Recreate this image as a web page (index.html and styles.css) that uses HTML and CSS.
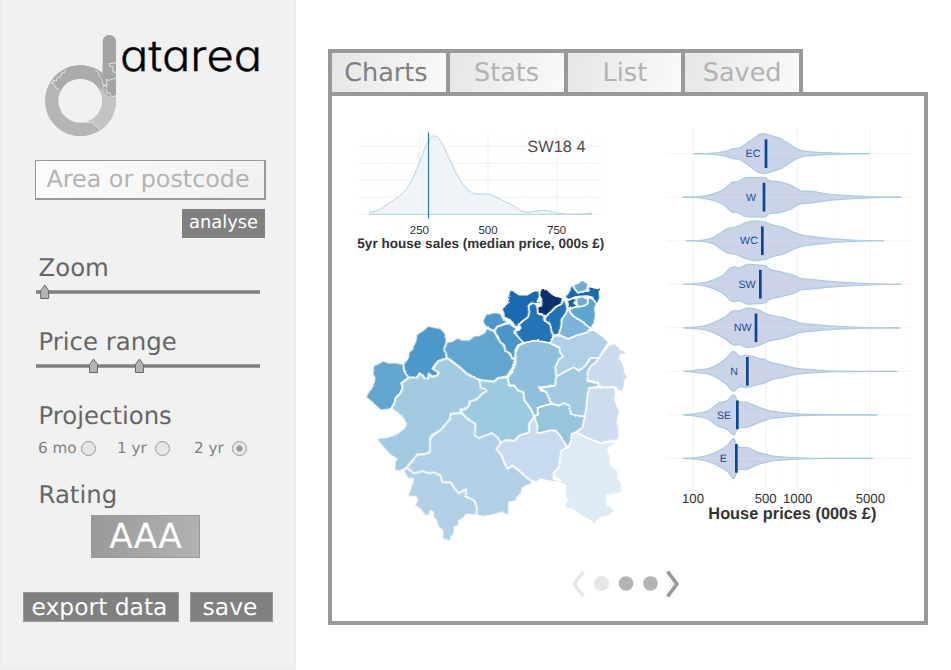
FILE: index.html
```html
<!DOCTYPE html>
<html lang="en">
<head>
<meta charset="utf-8">
<title>datarea</title>
<link rel="stylesheet" href="styles.css">
</head>
<body>
<aside class="sidebar">
  <header class="brand">
    <svg class="brand-mark" viewBox="0 0 255 330">
      <clipPath id="mark"><path clip-rule="evenodd" d="M188 35a20 20 0 0 1 40 0V212A106.500 106.500 0 1 1 188 129ZM121 146a66 66 0 1 0 .1 0Z"/></clipPath>
      <g clip-path="url(#mark)">
        <rect width="255" height="330" fill="#b5b5b5"/>
        <path fill="#ababab" d="M33 157 56 178 120 210 188 172 190 100 70 95Z"/>
        <path fill="#a4a4a4" d="M166 120 180 132 190 150 188 0H255V205H208L188 172Z"/>
        <path fill="#c3c3c3" d="M188 172 195 192 206 198 218 200 230 196V330H180L176 297 164 280 140 272Z"/>
        <g class="mark-lines">
          <path d="M77 119 73 129 66 128 61 140 51 144 49 153 40 151 39 160 33 158M35 158 45 166 49 177 57 178"/>
          <path d="M166 121 175 127 178 140 186 149 189 162 193 170M188 172 196 163 202 168 198 176 201 190 209 188 214 200 229 197"/>
          <path d="M228 98 207 101 210 110 219 109 219 126 228 127M228 144 206 151 199 148 201 163 194 169"/>
          <path d="M135 277 151 278 158 274 164 285 171 288 177 298"/>
        </g>
      </g>
    </svg>
    <svg class="brand-name" viewBox="0 0 150 50"><text x="0" y="41" textLength="142" lengthAdjust="spacingAndGlyphs">atarea</text></svg>
  </header>
  <div class="field">Area or postcode</div>
  <div class="button analyse">analyse</div>
  <section class="control zoom">
    <h2>Zoom</h2>
    <svg class="slider" viewBox="0 0 224 20"><path class="track" d="M0 10H224"/><path class="thumb" d="M4.700 16.500V8.500L8.700 3 12.700 8.500V16.500Z"/></svg>
  </section>
  <section class="control">
    <h2>Price range</h2>
    <svg class="slider" viewBox="0 0 224 20"><path class="track" d="M0 10H224"/><path class="thumb" d="M53.500 16.500V8.500L57.500 3 61.500 8.500V16.500ZM99.400 16.500V8.500L103.400 3 107.400 8.500V16.500Z"/></svg>
  </section>
  <section class="control projections">
    <h2>Projections</h2>
    <div class="radios">
      <span class="option">6 mo</span><i class="radio"></i>
      <span class="option year">1 yr</span><i class="radio"></i>
      <span class="option last">2 yr</span><i class="radio on"></i>
    </div>
  </section>
  <section class="rating">
    <h2>Rating</h2>
    <div class="grade">AAA</div>
  </section>
  <footer class="actions"><div class="button export">export data</div><div class="button save">save</div></footer>
</aside>
<main class="content">
  <nav class="tabs"><div class="tab active">Charts</div><div class="tab">Stats</div><div class="tab list">List</div><div class="tab">Saved</div></nav>
  <div class="panel">
    <div class="charts">
      <div class="column">
        <svg class="density" viewBox="90 255 780 390">
          <g class="minor"><path d="M195 277V535M401 277V535M607 277V535M813 277V535M118 292H848M118 344H848M118 395H848M118 447H848M118 498H848"/></g>
          <g class="major"><path d="M298 277V535M504 277V535M710 277V535M118 318H848M118 370H848M118 421H848M118 472H848M118 523H848"/></g>
          <path id="density-area" class="area"/>
          <path class="median-line" d="M325.500 277V536"/>
          <text class="place" x="622" y="337" textLength="175">SW18 4</text>
          <g class="ticks"><text x="298" y="582">250</text><text x="504" y="582">500</text><text x="710" y="582">750</text></g>
          <text class="axis-title" x="112" y="623" textLength="741" lengthAdjust="spacingAndGlyphs">5yr house sales (median price, 000s £)</text>
        </svg>
        <svg class="map" viewBox="0 0 870 840">
          <filter id="coast" x="0" y="0" width="1" height="1" color-interpolation-filters="sRGB"><feTurbulence type="fractalNoise" baseFrequency=".28" numOctaves="1" seed="4"/><feDisplacementMap in="SourceGraphic" scale="7" xChannelSelector="R" yChannelSelector="G"/></filter>
          <g transform="translate(2 2)"><g filter="url(#coast)">
          <path fill="#62a6d0" d="M44 378 66 346 72 322 66 310 68 285 84 278 96 270 114 276 134 275 158 280 160 300 175 321 152 338 157 350 148 370 136 380 130 400 122 415 90 419 60 392Z"/>
          <path fill="#4d98ca" d="M158 280 172 262 174 243 185 236 188 222 195 212 197 192 222 175 232 163 242 168 270 173 284 188 288 214 280 235 286 250 289 263 262 272 246 294 265 306 258 316 243 318 234 309 234 323 222 324 216 314 206 309 200 320 175 321 164 308 160 295Z"/>
          <path fill="#62a6d0" d="M289 213 305 211 320 201 333 207 356 207 368 195 385 194 402 185 408 172 430 181 440 200 450 215 460 225 465 240 478 248 484 262 492 265 486 290 475 308 465 318 443 322 430 333 400 330 384 327 350 311 325 288 300 268 289 263 286 250 280 235Z"/>
          <path fill="#4d98ca" d="M397 155 397 148 406 130 430 125 450 128 458 145 472 155 440 168 430 181 412 172 402 165Z"/>
          <g transform="translate(420 0)">
            <path fill="#4a96c9" d="M20 168 55 157 68 168 78 174 70 185 85 200 100 215 80 225 74 240 72 265 64 262 58 248 45 240 40 222 30 215 20 195 12 181Z"/>
            <path fill="#1b69b2" d="M33 115 52 95 53 75 58 55 75 65 85 72 110 72 130 60 145 60 147 78 140 92 150 90 150 98 135 100 120 98 114 105 116 125 112 140 98 150 85 160 78 172 68 160 58 148 40 140 38 125Z"/>
            <path fill="#2473b6" d="M135 100 140 110 142 128 160 135 160 148 178 160 182 180 188 195 178 218 150 212 130 210 100 217 88 205 75 190 75 180 85 178 90 172 85 162 98 150 112 140 116 125 114 105 125 98Z"/>
            <path fill="#2171b5" d="M165 138 182 122 195 108 212 100 218 85 224 92 230 115 225 130 212 148 212 165 205 190 188 195 182 180 178 160 163 150Z"/>
            <path fill="#08306b" d="M148 60 158 53 172 58 180 68 195 75 216 82 212 100 195 108 182 122 172 130 165 138 155 130 142 128 140 110 152 105 152 85 146 75Z"/>
            <path fill="#1b69b2" d="M222 80 232 68 240 48 248 42 250 52 262 66 285 62 295 60 290 48 300 48 318 53 330 52 326 65 328 80 320 102 310 95 305 80 290 76 262 78 250 80 235 88Z"/>
            <path fill="#6aaed6" d="M248 42 262 38 272 28 282 32 293 40 290 50 288 60 262 66 252 55Z"/>
            <path fill="#1460a8" d="M228 90 250 82 258 90 250 96 260 106 245 112 230 112 232 100Z"/>
            <path fill="#5fa5d0" d="M235 118 245 112 262 108 280 106 292 98 290 80 305 84 318 98 313 115 315 135 312 155 300 174 270 150 245 135Z"/>
            <path fill="#6aaed6" d="M256 82 275 78 290 84 292 98 278 106 262 108 258 96Z"/>
            <path fill="#7ab4d9" d="M232 115 245 135 270 150 300 174 285 187 260 194 232 205 210 195 205 190 212 165 212 148 225 130Z"/>
            <path fill="#b1d0e8" d="M190 195 210 195 232 205 260 194 285 187 303 175 320 185 340 200 355 215 345 228 335 245 325 262 300 262 290 275 285 285 265 300 248 290 220 305 195 318 193 290 205 265 217 258 208 245 206 230 178 218Z"/>
            <path fill="#cadbf0" d="M355 222 370 218 385 228 390 235 408 245 408 250 390 252 386 262 395 275 402 295 403 308 411 318 402 330 402 345 392 368 385 360 372 348 345 352 325 348 322 335 300 330 290 332 292 300 302 285 315 275 325 262 340 240Z"/>
            <path fill="#8ec0dd" d="M100 217 130 210 150 212 178 218 206 232 208 245 217 258 205 265 193 290 197 318 193 345 146 350 150 360 168 365 178 390 185 400 160 405 140 412 142 432 130 437 120 415 100 388 98 365 82 360 70 345 55 345 50 320 65 305 75 275 75 245 85 225Z"/>
            <path fill="#a3cae1" d="M197 318 220 305 248 290 265 300 285 285 300 262 325 262 315 275 302 285 292 300 290 332 322 338 322 348 295 352 290 380 288 405 282 438 262 435 240 432 236 405 220 398 205 405 185 400 178 390 168 365 148 352 193 345Z"/>
            <path fill="#cddcf0" d="M295 352 322 350 345 350 372 350 376 365 372 385 380 405 388 425 382 440 380 455 385 475 385 500 378 510 350 512 330 517 290 502 255 485 275 470 282 438 288 405 290 380Z"/>
            <path fill="#98c5de" d="M130 437 142 432 140 412 160 405 185 400 205 405 220 398 236 405 240 430 262 435 282 438 275 470 255 485 243 490 242 510 232 532 220 515 208 495 195 480 175 480 145 488 138 485 140 465Z"/>
            <path fill="#c7daef" d="M130 437 140 465 138 485 145 488 175 480 195 480 208 495 220 515 230 532 212 540 208 570 205 590 190 605 188 625 210 632 195 635 160 628 148 625 145 635 130 632 125 633 100 615 85 600 65 585 50 595 40 575 30 550 17 535 30 515 45 508 70 510 85 495 115 485 115 460 125 445Z"/>
            <path fill="#deebf4" d="M255 485 290 502 330 517 378 513 380 518 355 530 350 540 360 555 358 580 370 590 382 600 382 620 393 640 393 665 370 672 348 675 348 700 360 708 370 718 360 735 330 742 308 760 300 750 270 735 245 715 225 712 222 700 232 685 222 675 225 645 200 635 210 628 190 620 190 605 205 590 208 560 212 540 232 530 242 510 243 490Z"/>
          </g>
          <path fill="#a2cbe1" d="M122 415 130 400 136 380 148 370 157 350 152 338 175 321 200 320 206 309 216 314 222 324 234 323 234 309 243 318 258 316 265 306 246 294 262 272 289 263 325 288 350 311 384 327 390 340 390 352 405 355 408 363 395 368 385 380 370 390 357 392 355 405 345 415 330 415 328 427 300 430 298 445 270 478 245 492 238 502 238 545 225 550 200 552 175 580 165 593 145 602 132 600 132 572 138 565 118 553 80 510 82 502 115 498 140 488 160 472 166 460 155 440 140 427Z"/>
          <path fill="#9ccae1" d="M384 327 400 330 430 333 443 322 470 320 475 345 490 345 502 360 518 365 520 388 540 415 550 437 545 445 535 460 535 485 505 495 490 510 465 508 450 515 440 500 425 488 410 492 385 502 372 495 374 460 355 448 335 430 332 418 345 415 355 405 357 392 370 390 385 380 395 368 408 363 405 355 390 352 390 340Z"/>
          <path fill="#b1d0e6" d="M328 427 335 430 355 448 374 460 372 495 385 502 410 492 425 488 440 500 450 515 437 535 450 550 460 575 470 595 485 585 505 600 520 615 545 633 540 640 515 652 512 668 500 680 495 692 475 695 475 728 468 735 455 725 418 735 400 738 378 735 378 708 370 690 345 678 346 655 325 668 312 655 300 635 275 635 270 615 250 605 235 608 215 602 190 608 168 592 200 552 225 550 238 545 238 502 270 478 298 445 300 430Z"/>
          <path fill="#b1d0e6" d="M158 600 168 592 190 608 215 602 235 608 250 605 270 615 275 635 300 635 312 655 325 668 346 655 345 678 370 690 378 708 378 733 345 732 340 742 325 750 325 765 313 768 310 790 300 800 300 808 308 812 295 812 275 805 275 780 260 765 258 750 247 740 247 725 240 720 235 738 220 732 210 718 190 703 200 690 195 678 170 678 180 650 188 625 170 622Z"/>
          </g></g>
        </svg>
      </div>
      <svg class="violins" viewBox="0 0 816 1230">
        <path class="minor" d="M239 24V1090M394 24V1090M550 24V1090M770 24V1090"/>
        <path class="major" d="M129 24V1105M348 24V1105M442 24V1105M661 24V1105"/>
        <g id="violin-rows"></g>
        <g class="price-ticks"><text x="129" y="1149">100</text><text x="347" y="1149">500</text><text x="443" y="1149">1000</text><text x="661" y="1149">5000</text></g>
        <text class="price-title" x="175" y="1196" textLength="504" lengthAdjust="spacingAndGlyphs">House prices (000s £)</text>
      </svg>
    </div>
    <svg class="pager" viewBox="0 0 110 30">
      <path class="faint" d="M13.500 2.500 4 15 13.500 27.500"/>
      <circle cx="31.600" cy="14.500" r="7.500" fill="#e6e6e6"/><circle cx="56" cy="14.500" r="7.300" fill="#b3b3b3"/><circle cx="80.500" cy="14.500" r="7.300" fill="#b3b3b3"/>
      <path d="M97.500 2.500 107 15 97.500 27.500"/>
    </svg>
  </div>
</main>
<script src="charts.js"></script>
</body>
</html>
```
FILE: styles.css
```css
* { box-sizing: border-box; }
body { margin: 0; width: 951px; height: 670px; display: flex; background: #fff; font-family: "DejaVu Sans", sans-serif; overflow: hidden; text-rendering: geometricPrecision; }
svg { display: block; flex: none; }
h2 { margin: 0; font-size: 24.400px; font-weight: 400; line-height: 32px; height: 30px; color: #666; padding-left: .5px; }

.sidebar { width: 296px; height: 670px; flex: none; background: #f1f1f1; border: 1px solid #ececec; border-top-color: #eee; padding: 0 0 0 22px; margin-right: 32px; }
.brand { display: flex; height: 159px; padding: 29px 0 0 17px; }
.brand-mark { width: 85px; height: 110px; margin-right: -5px; }
.brand-name { width: 150px; height: 50px; overflow: visible; }
.brand-name text { font: 300 43px Inter, sans-serif; font-feature-settings: "cv11"; fill: #000; stroke: #000; stroke-width: .3; }
.mark-lines { fill: none; stroke: #eee; stroke-width: 2.5; stroke-linejoin: round; }
.field { width: 231px; height: 40px; margin-left: 12px; border: solid #999; border-width: 1.500px 2px 2px 1.500px; padding-left: 10.500px; background: linear-gradient(100deg, #fcfcfc, #f1f1f1); color: #b3b3b3; font-size: 23.800px; line-height: 37px; white-space: nowrap; }
.button { background: #808080; color: #fff; text-align: center; white-space: nowrap; }
.analyse { width: 83px; height: 29px; margin: 9px 0 14px 159px; font-size: 17.900px; line-height: 27px; }
.control { height: 74px; padding-left: 15px; }
.slider { width: 224px; height: 20px; margin-left: -2px; }
.track { stroke: #808080; stroke-width: 3.700; fill: none; }
.thumb { fill: #b3b3b3; stroke: #666; stroke-width: 1; }
.projections { height: 79px; }
.radios { display: flex; align-items: center; height: 18px; margin-top: 9px; font-size: 15.200px; color: #808080; }
.option { white-space: nowrap; width: 43px; margin: 0; }
.year { width: 38px; margin-left: 21px; }
.last { width: 38px; margin-left: 24px; }
.radio { width: 15px; height: 15px; border: 1.500px solid #999; border-radius: 50%; background: #e6e6e6; flex: none; }
.on { background: radial-gradient(circle, #999 2.700px, #e8e8e8 3.500px); }
.rating { padding-left: 15px; }
.grade { width: 109px; height: 43px; margin: 6px 0 34px 53px; border: 1px solid #999; background: linear-gradient(100deg, #999, #b3b3b3); color: #fff; font-size: 34.500px; line-height: 43px; text-align: center; }
.actions { display: flex; gap: 11px; }
.actions .button { height: 30px; font-size: 23.400px; line-height: 28px; border: 1px solid #999; padding-right: 3px; }
.export { width: 156px; }
.save { width: 83px; }

.content { width: 600px; flex: none; padding-top: 49px; }
.tabs { display: flex; height: 43px; width: 475px; border-right: 4px solid #999; }
.tab { width: 25%; flex: none; border: solid #999; border-width: 4px 0 0 4px; background: linear-gradient(105deg, #e6e6e6, #fafafa); color: #b3b3b3; font-size: 25.500px; line-height: 40px; text-align: center; }
.active { color: #808080; padding-right: 6px; }
.list { padding-left: 1px; }
.panel { height: 533px; border: 4px solid #999; }
.charts { display: flex; padding: 24px 0 0 18px; }
.column { width: 300px; padding-top: 5px; }
.density { width: 260px; height: 130px; }
.map { width: 290px; height: 280px; margin-top: 15px; overflow: visible; }
.map path { stroke: #fff; stroke-width: 4.800; stroke-linejoin: round; }
.violins { width: 272px; height: 410px; }
.pager { width: 110px; height: 30px; margin: 19px 0 0 238px; }
.pager path { fill: none; stroke: #999; stroke-width: 3.600; }
.pager .faint { stroke: #e6e6e6; }

.charts text { font-family: "Liberation Sans", Arial, sans-serif; fill: #333; }
.major { stroke: #f1f1f1; stroke-width: 3; fill: none; }
.minor { stroke: #f9f9f9; stroke-width: 2; fill: none; }
.area { fill: #eff4f9; stroke: #b3d2e6; stroke-width: 3; }
.median-line { stroke: #2878b8; stroke-width: 3.500; }
.charts .place { font-size: 49px; fill: #4d4d4d; }
.ticks text { font-size: 34.500px; text-anchor: middle; }
.axis-title { font-size: 41px; font-weight: 700; }
.row-line { stroke: #f1f1f1; stroke-width: 3; }
.violin { fill: #cad3e7; stroke: #a9cbe1; stroke-width: 3.500; stroke-linejoin: round; }
.median-bar { stroke: #084594; stroke-width: 8; }
.charts .code { font-size: 32px; fill: #17489b; text-anchor: middle; }
.price-ticks text { font-size: 39.500px; text-anchor: middle; }
.price-title { font-size: 50px; font-weight: 700; }
```
FILE: charts.js
```js
// Smooth path through points given as a flat x, y list
function curve(flat) {
  const p = [];
  for (let i = 0; i < flat.length; i += 2) p.push([flat[i], flat[i + 1]]);
  let d = `M${p[0]}`;
  for (let i = 0; i < p.length - 1; i++) {
    const a = p[i - 1] || p[i], b = p[i], c = p[i + 1], e = p[i + 2] || c;
    const w = (c[0] - b[0]) / 3;
    const m1 = b === a ? 0 : (c[1] - a[1]) / (c[0] - a[0]);
    const m2 = e === c ? 0 : (e[1] - b[1]) / (e[0] - b[0]);
    d += `C${b[0] + w},${b[1] + m1 * w} ${c[0] - w},${c[1] - m2 * w} ${c}`;
  }
  return d;
}

document.getElementById('density-area').setAttribute('d', curve([149,516,160,515,180,508,200,495,220,481,245,463,265,438,285,400,305,350,320,313,333,292,343,288,353,292,368,313,385,350,405,392,425,427,445,450,462,460,485,462,505,462,525,470,545,480,570,492,590,504,605,513,622,517,645,514,670,511,690,513,710,519,750,523,790,522,815,519]) + 'V523H149Z');

// code, label x, median x, half-profile
const rows = [
  ['EC', 309, 348, [130,0,180,1,230,8,250,15,270,18,300,38,325,56,340,60,365,54,390,46,410,34,440,15,470,7,550,2,660,0]],
  ['W', 303, 342, [100,0,150,2,190,10,220,22,245,44,265,47,285,58,320,59,345,59,360,49,385,47,420,37,450,20,480,18,550,8,640,3,752,0]],
  ['WC', 297, 337, [108,0,160,2,190,10,230,36,260,42,290,55,317,60,340,57,370,47,400,40,440,22,460,16,520,9,590,3,702,0]],
  ['SW', 291, 331, [100,0,150,3,190,13,220,28,240,48,253,52,268,49,290,59,320,58,345,56,360,45,390,38,435,26,450,18,480,15,550,8,640,3,752,0]],
  ['NW', 278, 318, [100,0,160,5,190,15,225,33,248,51,268,51,290,59,325,54,355,40,400,31,435,20,450,14,500,9,550,5,640,1,750,0]],
  ['N', 252, 292, [100,0,150,5,175,8,205,22,230,40,250,60,268,46,290,49,325,39,345,35,360,27,400,18,445,8,500,4,550,1,740,0]],
  ['SE', 222, 262, [100,0,150,6,175,13,205,35,230,42,251,60,264,41,290,38,330,22,350,15,365,11,440,3,550,0,680,0]],
  ['E', 220, 259, [100,0,150,4,175,10,205,22,235,42,251,60,264,35,290,33,325,18,350,12,370,7,440,2,550,0,668,0]]
];
document.getElementById('violin-rows').innerHTML = rows.map(([code, lx, mx, half], i) => {
  const d = curve(half);
  return `<g transform="translate(0 ${101 + i * 130.6})"><path class="row-line" d="M51 0H787"/><path class="violin" d="${d}"/><path class="violin" transform="scale(1 -1)" d="${d}"/><path class="median-bar" d="M${mx}-43V43"/><text class="code" x="${lx}" y="11">${code}</text></g>`;
}).join('');
```
